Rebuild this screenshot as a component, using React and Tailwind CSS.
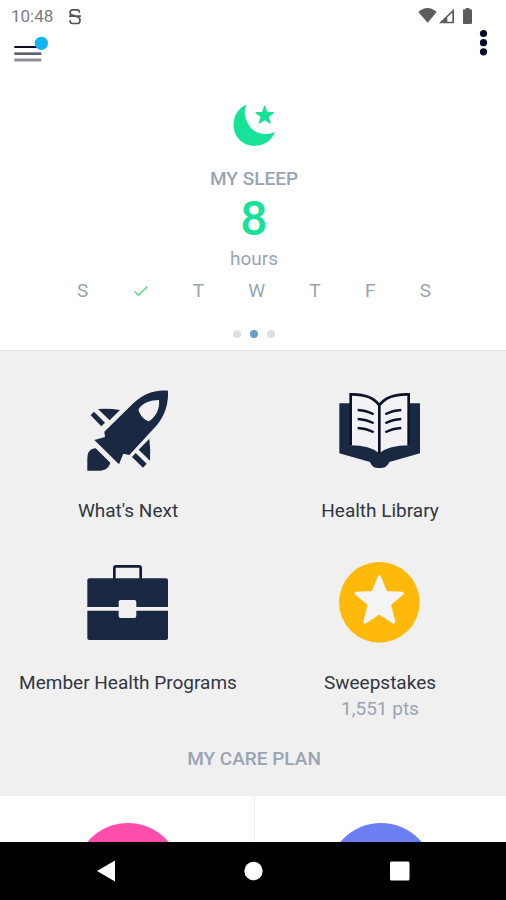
import React from "react";

function StatusBar() {
  return (
    <div className="flex h-7 shrink-0 items-center justify-between pt-1 pl-[11px] pr-8 text-[#7c7c7c]">
      <div className="flex items-center gap-4">
        <span className="text-[17px] leading-6">10:48</span>
        <svg viewBox="211 20 36 50" className="h-[17px] w-3" fill="none" stroke="#555" strokeWidth="5" aria-hidden="true">
          <path d="M242 34V31Q242 25 235 25H222Q214 25 214 33Q214 40 222 41L236 46Q244 49 244 56Q244 66 235 66H222Q214 66 214 58V56M211 44H247" />
        </svg>
      </div>
      <svg viewBox="54 22 168 51" className="h-[17px] w-14" fill="#5c5c5c" aria-hidden="true">
        <path d="M55 34Q83 10 110 34L83 66Z" />
        <path d="M117 68L162 24V68ZM142 50V63H157V36Z" fillRule="evenodd" />
        <path d="M189 28Q189 26 192 26H197V22H208V26H213Q216 26 216 28V67Q216 70 213 70H192Q189 70 189 67Z" />
      </svg>
    </div>
  );
}

function Header() {
  return (
    <header className="flex h-[45px] shrink-0 items-start justify-between pl-[14px] pr-[18px]">
      <button type="button" aria-label="Menu" className="mt-2">
        <svg viewBox="42 108 105 81" className="block h-[27px] w-[35px]">
          <path d="M43 141H124" stroke="#0d0f1c" strokeWidth="6" />
          <path d="M43 161H124" stroke="#5c6070" strokeWidth="8" />
          <path d="M43 180H124" stroke="#8e9096" strokeWidth="9" />
          <circle cx="124" cy="130" r="20" fill="#14b5ee" />
        </svg>
      </button>
      <button type="button" aria-label="More options">
        <svg viewBox="0 0 10 29" className="block h-[29px] w-[10px]" fill="#060a2b">
          <circle cx="5.5" cy="5.5" r="3.6" />
          <circle cx="5.5" cy="14.7" r="3.6" />
          <circle cx="5.5" cy="23.8" r="3.6" />
        </svg>
      </button>
    </header>
  );
}

function SleepCard() {
  return (
    <section className="flex flex-col items-center border-b border-[#e0e0e0] pt-[31px] pb-3 pl-[2px] text-[#9aa4b2]">
      <svg viewBox="129 42 126 126" className="size-[42px]" fill="#17e297" stroke="#17e297" strokeLinejoin="round" aria-hidden="true">
        <path d="M169 45C145 54 131 78 131 104C131 140 158 167 194 167C222 167 245 152 254 127C226 139 196 132 180 111C163 89 160 64 169 45Z" strokeWidth="1" />
        <path d="M224 49L230 67L250 68L234 80L240 99L224 88L208 99L214 80L198 68L218 67Z" strokeWidth="4" />
      </svg>
      <h2 className="mt-[21px] text-[19px] leading-6 font-medium">MY SLEEP</h2>
      <p className="mt-1 text-5xl leading-12 font-medium text-[#17e297]">8</p>
      <p className="mt-1 text-[19px] leading-6">hours</p>
      <div className="mt-2 flex w-full items-center justify-between px-[75px] text-[19px] leading-6">
        <span>S</span>
        <svg viewBox="0 0 16 12" className="h-3 w-4" fill="none" stroke="#5edc83" strokeWidth="1.6" role="img" aria-label="Completed">
          <path d="M1.5 6.5L5.5 10.2L14.5 1.5" />
        </svg>
        <span>T</span>
        <span>W</span>
        <span>T</span>
        <span>F</span>
        <span>S</span>
      </div>
      <div className="mt-[27px] flex gap-[9px]">
        <span className="size-2 rounded-full bg-[#dedfe1]" />
        <span className="size-2 rounded-full bg-[#6ba0cf]" />
        <span className="size-2 rounded-full bg-[#dedfe1]" />
      </div>
    </section>
  );
}

function RocketIcon() {
  return (
    <svg viewBox="51 30 246 246" className="size-[82px]" fill="#1a2842" aria-hidden="true">
      <path d="M294 32C252 28 215 45 190 70L103 155L105 171L73 180L147 253L160 221L178 225L250 147C282 115 296 78 294 32ZM267 60C242 60 217 68 205 89C211 107 222 119 237 124C257 111 270 87 267 60Z" fillRule="evenodd" />
      <path d="M84 87Q115 84 150 90L119 121ZM72 95L105 128L94 139L62 106Z" />
      <path d="M238 176Q242 208 240 242L206 209ZM197 219L230 251L219 263L186 231Z" />
      <path d="M52 272V236C52 215 62 206 77 205L121 248C116 265 103 272 86 272Z" />
    </svg>
  );
}

function BookIcon() {
  return (
    <svg viewBox="90 30 246 246" className="size-[82px]" aria-hidden="true">
      <path d="M91 70H333V220L241 246C234 261 226 264 211 264C197 264 189 261 183 246L91 220Z" fill="#1a2842" />
      <path d="M125 43C162 42 194 51 211 76C228 51 262 42 299 43V196C262 197 229 203 211 221C193 203 162 197 125 196Z" fill="#f2f2f4" />
      <path d="M125 196V43C162 42 194 51 211 76C228 51 262 42 299 43V196M211 76V222" fill="none" stroke="#0d1326" strokeWidth="8" />
      <path d="M146 90Q172 91 194 103M146 117Q172 118 194 130M146 144Q172 145 194 157M277 90Q251 91 229 103M277 117Q251 118 229 130M277 144Q251 145 229 157" fill="none" stroke="#0d1326" strokeWidth="7" />
    </svg>
  );
}

function BriefcaseIcon() {
  return (
    <svg viewBox="231 36 246 246" className="size-[82px]" fill="#1a2842" aria-hidden="true">
      <path d="M313 87V54Q313 49 318 49H387Q392 49 392 54V87" fill="none" stroke="#111c34" strokeWidth="8" />
      <path d="M232 171V91Q232 85 238 85H468Q474 85 474 91V171Z" />
      <path d="M232 182H474V264Q474 270 468 270H238Q232 270 232 264Z" />
      <rect x="326" y="150" width="53" height="54" rx="6" fill="#f0f0f2" />
    </svg>
  );
}

function StarIcon() {
  return (
    <svg viewBox="90 36 246 246" className="size-[82px]" aria-hidden="true">
      <circle cx="211" cy="157" r="121" fill="#ffb90a" />
      <path d="M211 81L230 128L280 130L241 163L254 216L211 188L168 216L181 163L142 130L192 128Z" fill="#f4f4f4" stroke="#f4f4f4" strokeWidth="10" strokeLinejoin="round" />
    </svg>
  );
}

const tiles = [
  { label: "What's Next", Icon: RocketIcon },
  { label: "Health Library", Icon: BookIcon },
  { label: "Member Health Programs", Icon: BriefcaseIcon },
  { label: "Sweepstakes", Icon: StarIcon, note: "1,551 pts" },
];

function Tile({ label, Icon, note }) {
  return (
    <button type="button" className="flex flex-col items-center text-[19px] leading-6 text-[#303642]">
      <Icon />
      <span className="mt-[27px]">{label}</span>
      {note && <span className="mt-[2px] text-[#9aa4b2]">{note}</span>}
    </button>
  );
}

function NavBar() {
  return (
    <nav className="flex h-[58px] shrink-0 items-center justify-between bg-black px-[94px]">
      <button type="button" aria-label="Back">
        <svg viewBox="0 0 24 24" className="block size-6" fill="#fff"><path d="M3 12L21 1.5V22.5Z" /></svg>
      </button>
      <button type="button" aria-label="Home">
        <svg viewBox="0 0 24 24" className="block size-6" fill="#fff"><circle cx="12.5" cy="12" r="9.2" /></svg>
      </button>
      <button type="button" aria-label="Recent apps">
        <svg viewBox="0 0 24 24" className="block size-6" fill="#fff"><rect x="2" y="2.5" width="19.5" height="19" rx="1.5" /></svg>
      </button>
    </nav>
  );
}

export default function App() {
  return (
    <div className="flex h-screen flex-col bg-white font-[Roboto,sans-serif]">
      <StatusBar />
      <Header />
      <main className="min-h-0 flex-1 overflow-y-auto [scrollbar-width:none]">
        <SleepCard />
        <section className="bg-[#f0f0f0] pt-[39px] pb-[25px] pl-[2px]">
          <div className="grid grid-cols-2 items-start gap-y-[39px]">
            {tiles.map((tile) => (
              <Tile key={tile.label} {...tile} />
            ))}
          </div>
          <h2 className="mt-[26px] text-center text-[19px] leading-6 font-medium text-[#9aa4b2]">MY CARE PLAN</h2>
        </section>
        <section className="grid grid-cols-2 pl-[2px]">
          <div className="flex justify-center pt-[27px] pb-8">
            <span className="size-[106px] rounded-full bg-[#ff4dab]" />
          </div>
          <div className="flex justify-center border-l border-[#eeeeee] pt-[27px] pb-8">
            <span className="size-[106px] rounded-full bg-[#6b7ff2]" />
          </div>
        </section>
      </main>
      <NavBar />
    </div>
  );
}
